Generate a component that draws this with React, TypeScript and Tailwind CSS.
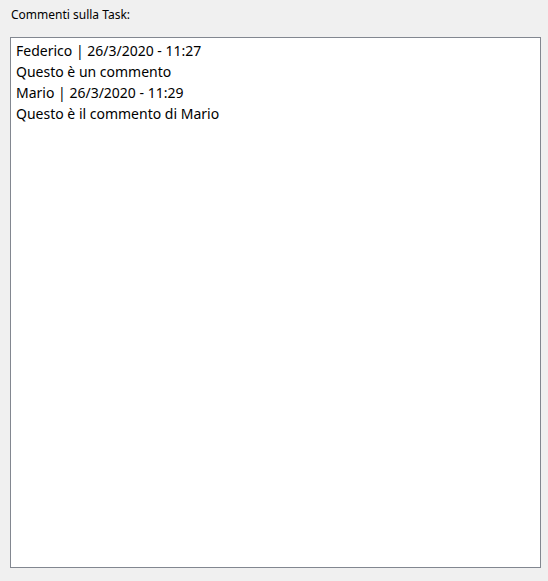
export default function App() {
  return (
    <div className="w-[548px] h-[581px] bg-[#f0f0f0] font-['Noto_Sans',sans-serif] text-black">
      <div className="pl-[11px] pt-[7px] text-[12px] leading-[16px] h-[37px]">Commenti sulla Task:</div>
      <div className="ml-[10px] w-[531px] h-[531px] bg-white border border-[#828790] px-[5px] pt-[2px] text-[14px] leading-[21px]">
        <div>Federico | 26/3/2020 - 11:27</div>
        <div>Questo è un commento</div>
        <div>Mario | 26/3/2020 - 11:29</div>
        <div>Questo è il commento di Mario</div>
      </div>
    </div>
  );
}
